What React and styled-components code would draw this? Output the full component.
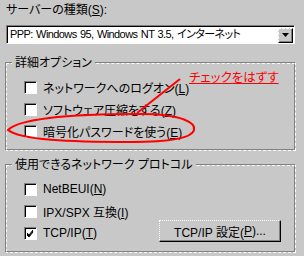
import styled, { createGlobalStyle } from 'styled-components';

const GlobalStyle = createGlobalStyle`
  html, body {
    margin: 0;
    padding: 0;
    background: #c8c8c8;
  }
  body {
    width: 304px;
    height: 256px;
    overflow: hidden;
  }
`;

const Dialog = styled.div`
  position: relative;
  width: 304px;
  height: 256px;
  box-sizing: border-box;
  padding: 3px 0 0 5px;
  display: flex;
  flex-direction: column;
  font-family: "Liberation Sans", "Noto Sans CJK JP", sans-serif;
  font-size: 12px;
  font-feature-settings: "palt";
  color: #000;
`;

const Label = styled.div`
  margin-left: 1px;
  height: 14px;
  line-height: 14px;
`;

const U = styled.span`
  text-decoration: underline;
`;

const Select = styled.div`
  margin: 8px 0 0 1px;
  width: 289px;
  height: 19px;
  box-sizing: border-box;
  display: flex;
  align-items: center;
  background: #fff;
  border-top: 1px solid #808080;
  border-left: 1px solid #808080;
  border-right: 1px dashed #fff;
  border-bottom: 1px dashed #fff;
  box-shadow: inset 1px 1px 0 #000;
`;

const SelectText = styled.span`
  flex: 1;
  padding-left: 3px;
  font-size: 11px;
  letter-spacing: -0.6px;
  word-spacing: 1px;
  line-height: 15px;
  white-space: nowrap;
`;

const DropButton = styled.span`
  width: 15px;
  height: 15px;
  margin: 1px 1px 0 0;
  box-sizing: border-box;
  display: flex;
  align-items: center;
  justify-content: center;
  background: #c8c8c8;
  border-top: 1px dashed #fff;
  border-left: 1px dashed #fff;
  border-right: 1px solid #000;
  border-bottom: 1px solid #000;
  box-shadow: inset -1px -1px 0 #808080;
`;

const GroupOuter = styled.div`
  margin-top: ${p => p.$top}px;
  width: 291px;
  height: 89px;
  box-sizing: border-box;
  border-top: 1px solid #808080;
  border-left: 1px solid #808080;
  border-right: 1px dashed #fff;
  border-bottom: 1px dashed #fff;
`;

const GroupInner = styled.div`
  height: 100%;
  box-sizing: border-box;
  display: flex;
  flex-direction: column;
  padding: 0 13px 0 17px;
  border-top: 1px dashed #fff;
  border-left: 1px dashed #fff;
  border-right: 1px solid #808080;
  border-bottom: 1px solid #808080;
`;

const GroupTitle = styled.span`
  align-self: flex-start;
  margin: -8px 0 6px -12px;
  padding: 0 3px;
  height: 14px;
  line-height: 14px;
  background: #c8c8c8;
`;

const Row = styled.div`
  height: 22px;
  display: flex;
  align-items: center;
  gap: 6px;
`;

const Box = styled.span`
  width: 13px;
  height: 13px;
  box-sizing: border-box;
  flex: none;
  display: flex;
  align-items: center;
  justify-content: center;
  background: #fff;
  border-top: 1px solid #808080;
  border-left: 1px solid #808080;
  border-right: 1px dashed #fff;
  border-bottom: 1px dashed #fff;
  box-shadow: inset 1px 1px 0 #000;
`;

const Button = styled.span`
  margin: -4px 0 0 auto;
  width: 122px;
  height: 22px;
  box-sizing: border-box;
  display: flex;
  align-items: center;
  justify-content: center;
  background: #c8c8c8;
  border-top: 1px dotted #fff;
  border-left: 1px dotted #fff;
  border-right: 1px solid #000;
  border-bottom: 1px solid #000;
  box-shadow: inset -1px -1px 0 #808080;
`;

const Overlay = styled.svg`
  position: absolute;
  left: 0;
  top: 0;
  pointer-events: none;
`;

const Note = styled.span`
  position: absolute;
  left: 189px;
  top: 71px;
  color: #ff0000;
  font-size: 12.5px;
  line-height: 14px;
  text-decoration: underline;
  white-space: nowrap;
`;

const Tick = () => (
  <svg width="9" height="9" viewBox="0 0 9 9">
    <path d="M1 4 L3 6 L7 1 M1 5 L3 7 L7 2 M1 6 L3 8 L7 3" stroke="#000" strokeWidth="1" fill="none" />
  </svg>
);

const Check = ({ checked, children }) => (
  <>
    <Box>{checked && <Tick />}</Box>
    <span>{children}</span>
  </>
);

export default function App() {
  return (
    <Dialog>
      <GlobalStyle />
      <Label>サーバーの種類(<U>S</U>):</Label>
      <Select>
        <SelectText>PPP: Windows 95, Windows NT 3.5, インターネット</SelectText>
        <DropButton>
          <svg width="7" height="4" viewBox="0 0 7 4">
            <path d="M0 0 H7 L3.5 4 Z" fill="#000" />
          </svg>
        </DropButton>
      </Select>

      <GroupOuter $top={18}>
        <GroupInner>
          <GroupTitle>詳細オプション</GroupTitle>
          <Row><Check>ネットワークへのログオン(<U>L</U>)</Check></Row>
          <Row><Check>ソフトウェア圧縮をする(<U>Z</U>)</Check></Row>
          <Row><Check>暗号化パスワードを使う(<U>E</U>)</Check></Row>
        </GroupInner>
      </GroupOuter>

      <GroupOuter $top={13}>
        <GroupInner>
          <GroupTitle>使用できるネットワーク プロトコル</GroupTitle>
          <Row><Check>NetBEUI(<U>N</U>)</Check></Row>
          <Row><Check>IPX/SPX 互換(<U>I</U>)</Check></Row>
          <Row>
            <Check checked>TCP/IP(<U>T</U>)</Check>
            <Button>TCP/IP 設定(<U>P</U>)...</Button>
          </Row>
        </GroupInner>
      </GroupOuter>

      <Overlay width="304" height="256" viewBox="0 0 304 256">
        <path
          d="M8 130 C20 118, 70 114, 140 114 C185 114, 196 124, 194 130 C192 138, 170 142, 130 142 C70 142, 20 140, 8 130 Z"
          stroke="#ff0000"
          strokeWidth="2"
          fill="none"
        />
        <path d="M137 113 L180 79" stroke="#ff0000" strokeWidth="2" fill="none" />
      </Overlay>
      <Note>チェックをはずす</Note>
    </Dialog>
  );
}
